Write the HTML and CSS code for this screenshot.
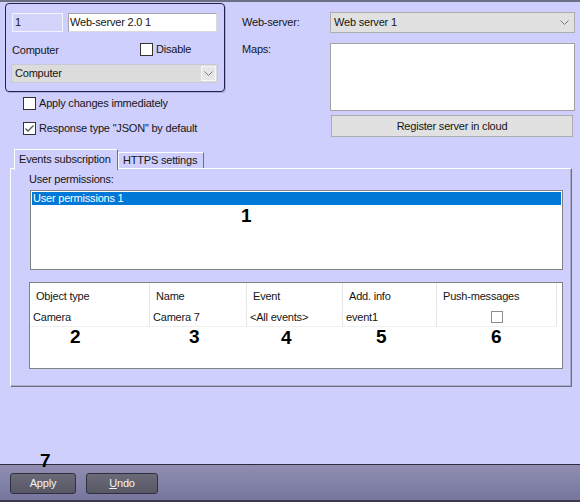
FILE: index.html
```html
<!DOCTYPE html>
<html lang="en">
<head>
  <meta charset="UTF-8">
  <title>Web-server settings</title>
  <link rel="stylesheet" href="styles.css">
</head>
<body>
  <div class="topline"></div>

  <div class="top">
    <!-- left: object box + options -->
    <div class="left-col">
      <div class="group">
        <div class="id-row">
          <div class="field field-id">1</div>
          <div class="field field-name">Web-server 2.0 1</div>
        </div>
        <div class="comp-row">
          <span class="comp-label">Computer</span>
          <label class="check">
            <span class="box"></span>
            <span>Disable</span>
          </label>
        </div>
        <div class="combo">
          <span>Computer</span>
          <span class="combo-btn">
            <svg width="9" height="5" viewBox="0 0 9 5"><path d="M0.5 0.5 L4.5 4.5 L8.5 0.5" fill="none" stroke="#7a7a7a"/></svg>
          </span>
        </div>
      </div>
      <label class="opt opt-first">
        <span class="box"></span>
        <span>Apply changes immediately</span>
      </label>
      <label class="opt opt-second">
        <span class="box">
          <svg width="11" height="11" viewBox="0 0 11 11"><path d="M1.5 5.5 L4 8 L9.5 2.5" fill="none" stroke="#555" stroke-width="1.3"/></svg>
        </span>
        <span>Response type "JSON" by default</span>
      </label>
    </div>

    <!-- right: server fields -->
    <div class="right-col">
      <span class="lbl lbl-mid">Web-server:</span>
      <div class="select">
        <span>Web server 1</span>
        <svg width="9" height="5" viewBox="0 0 9 5"><path d="M0.5 0.5 L4.5 4.5 L8.5 0.5" fill="none" stroke="#7a7a7a"/></svg>
      </div>
      <span class="lbl lbl-maps">Maps:</span>
      <div class="maps"></div>
      <div class="register">Register server in cloud</div>
    </div>
  </div>

  <div class="tabs">
    <div class="tab active">Events subscription</div>
    <div class="tab">HTTPS settings</div>
  </div>

  <div class="panel">
    <div class="panel-label">User permissions:</div>
    <div class="list">
      <div class="list-sel">User permissions 1</div>
    </div>
    <div class="table">
      <div class="th">Object type</div>
      <div class="th">Name</div>
      <div class="th">Event</div>
      <div class="th">Add. info</div>
      <div class="th">Push-messages</div>
      <div class="td">Camera</div>
      <div class="td">Camera 7</div>
      <div class="td">&lt;All events&gt;</div>
      <div class="td">event1</div>
      <div class="td td-check"><span class="box box-light"></span></div>
    </div>
  </div>

  <div class="spacer"></div>

  <div class="footer">
    <div class="btn btn-apply">Apply</div>
    <div class="btn btn-undo"><u>U</u>ndo</div>
  </div>

  <!-- callout numbers -->
  <span class="mark" style="left:241px;top:206px">1</span>
  <span class="mark" style="left:70px;top:327px">2</span>
  <span class="mark" style="left:189px;top:327px">3</span>
  <span class="mark" style="left:281px;top:328px">4</span>
  <span class="mark" style="left:376px;top:327px">5</span>
  <span class="mark" style="left:491px;top:327px">6</span>
  <span class="mark" style="left:40px;top:451px">7</span>
</body>
</html>
```

FILE: styles.css
```css
* {
  box-sizing: border-box;
}
body {
  margin: 0;
  width: 580px;
  height: 502px;
  position: relative;
  display: flex;
  flex-direction: column;
  overflow: hidden;
  background: #cfcffe;
  font-family: "Liberation Sans", Arial, sans-serif;
  font-size: 11px;
  line-height: 13px;
  letter-spacing: -0.2px;
  color: #151515;
}
.topline {
  height: 2px;
  background: #6e6e84;
}

/* top area */
.top {
  display: flex;
  margin-top: 1px;
}
.left-col {
  margin-left: 5px;
  width: 220px;
}
.group {
  height: 89px;
  border: 1px solid #23234a;
  border-radius: 4px;
  padding: 9px 6px 0 6px;
  box-shadow: 1px 1px 0 #a9a9dc;
}
.id-row {
  display: flex;
  gap: 5px;
}
.field {
  height: 19px;
  line-height: 17px;
  border: 1px solid #9a9a9a;
  background: #fff;
  padding-left: 1px;
}
.field-id {
  width: 51px;
  padding-left: 2px;
  background: #d4d4fb;
  border-color: #f3f3ff;
}
.field-name {
  width: 149px;
  border-color: #a6a6a6 #dadada #dadada #a6a6a6;
}
.comp-row {
  display: flex;
  align-items: center;
  height: 13px;
  margin-top: 11px;
}
.comp-label {
  width: 128px;
  padding-top: 2px;
}
.check, .opt {
  display: flex;
  align-items: center;
  gap: 3px;
}
.box {
  display: flex;
  align-items: center;
  justify-content: center;
  width: 13px;
  height: 13px;
  border: 1px solid #333;
  background: #fff;
}
.box-light {
  width: 12px;
  height: 12px;
  border-color: #8c8c8c;
}
.combo {
  display: flex;
  align-items: center;
  width: 207px;
  height: 19px;
  margin: 8px 0 0 -1px;
  padding-left: 3px;
  border: 1px solid #c9c9d6;
  background: #dcdcdc;
}
.combo-btn {
  display: flex;
  align-items: center;
  justify-content: center;
  width: 15px;
  height: 15px;
  margin-left: auto;
  margin-right: 1px;
  border: 1px solid #f6f6f6;
  background: #e6e6e6;
}
.opt {
  height: 13px;
  margin-left: 18px;
}
.opt-first {
  margin-top: 5px;
}
.opt-second {
  margin-top: 12px;
}

.right-col {
  display: grid;
  grid-template-columns: 88px 245px;
  align-content: start;
  margin: 9px 0 0 17px;
}
.lbl-mid {
  align-self: center;
}
.lbl-maps {
  margin-top: 10px;
}
.select {
  display: flex;
  align-items: center;
  justify-content: space-between;
  height: 21px;
  padding: 0 5px 0 3px;
  border: 1px solid #adadad;
  background: #e1e1e1;
}
.maps {
  height: 68px;
  margin-top: 10px;
  border: 1px solid #a3a3a3;
  background: #fff;
}
.register {
  grid-column: 2;
  height: 22px;
  margin: 4px 2px 0 1px;
  border: 1px solid #adadad;
  background: #e1e1e1;
  text-align: center;
  line-height: 20px;
}

/* tabs */
.tabs {
  display: flex;
  align-items: flex-end;
  height: 19px;
  margin: 12px 0 0 14px;
}
.tab {
  height: 16px;
  width: 86px;
  padding: 1px 0 0 4px;
  border-top: 1px solid #fff;
  border-left: 1px solid #fff;
  border-right: 1px solid #6e6e80;
}
.tab.active {
  position: relative;
  z-index: 1;
  width: 104px;
  height: 21px;
  margin-bottom: -2px;
  padding-top: 3px;
  background: #cfcffe;
}
.panel {
  width: 562px;
  height: 219px;
  margin-left: 10px;
  padding: 4px 8px 0 18px;
  border: 1px solid #fff;
  border-right-color: #6e6e80;
  border-bottom-color: #6e6e80;
  box-shadow: inset -1px -1px 0 #ababc8;
}
.list {
  height: 80px;
  margin: 4px 0 0 1px;
  padding: 1px;
  border: 1px solid #828282;
  background: #fff;
}
.list-sel {
  height: 13px;
  padding-left: 1px;
  background: #0078d7;
  color: #fff;
}
.table {
  display: grid;
  grid-template-columns: 120px 97px 96px 94px 120px;
  grid-template-rows: 24px 20px;
  align-content: start;
  height: 87px;
  margin-top: 12px;
  border: 1px solid #828282;
  background: #fff;
}
.th, .td {
  display: flex;
  align-items: center;
  border-right: 1px solid #e6e6e6;
  border-bottom: 1px solid #f0f0f0;
}
.th {
  padding: 3px 0 0 6px;
  border-bottom-color: #fff;
}
.td {
  padding: 2px 0 0 3px;
}
.td-check {
  justify-content: center;
  padding: 0;
}

.spacer {
  flex: 1;
}
.footer {
  display: flex;
  gap: 10px;
  height: 38px;
  padding: 8px 0 0 10px;
  border-top: 1px solid #2c2c3c;
  border-bottom: 2px solid #3a3a4a;
  background: linear-gradient(#8f8eb1, #77769f);
}
.btn {
  height: 21px;
  border: 1px solid #2f2f40;
  border-radius: 3px;
  background: linear-gradient(#6a6a78, #575765);
  color: #f4f4f4;
  text-align: center;
  line-height: 19px;
}
.btn-apply {
  width: 66px;
}
.btn-undo {
  width: 72px;
}

.mark {
  position: absolute;
  font-weight: bold;
  font-size: 19px;
  line-height: 19px;
  letter-spacing: 0;
  color: #000;
}
```
